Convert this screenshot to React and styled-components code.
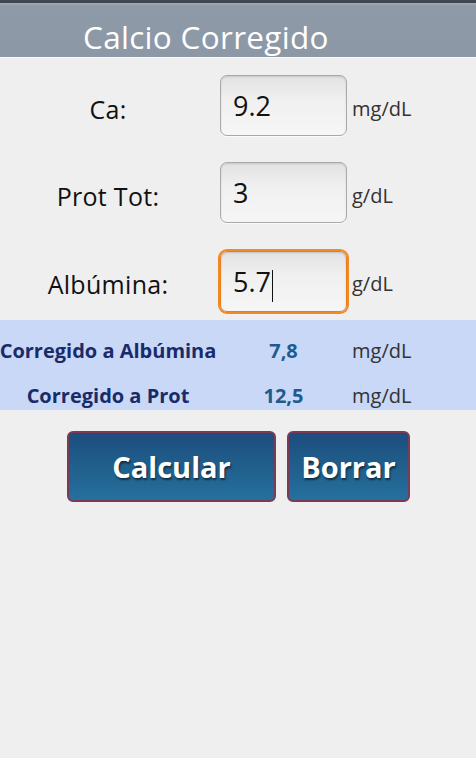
import React from "react";
import styled, { createGlobalStyle } from "styled-components";

const GlobalStyle = createGlobalStyle`
  html, body {
    margin: 0;
    padding: 0;
    background: #efefef;
    font-family: "Open Sans", "Noto Sans", "DejaVu Sans", sans-serif;
  }
`;

const Screen = styled.div`
  width: 476px;
  height: 758px;
  background: #efefef;
  overflow: hidden;
`;

const TitleBar = styled.div`
  height: 58px;
  box-sizing: border-box;
  border-top: 3px solid #3e4751;
  background: linear-gradient(#a3acb8 0px, #8f9aa8 3px, #8d98a6 100%);
  border-bottom: 1px solid #fafafa;
  padding-left: 83px;
  color: #ffffff;
  font-size: 31.5px;
  line-height: 68px;
  letter-spacing: 0.3px;
`;

const Form = styled.div`
  display: flex;
  flex-direction: column;
  gap: 26px;
  padding-top: 17px;
`;

const Row = styled.div`
  display: grid;
  grid-template-columns: 216px 4px 127px 5px 1fr;
  align-items: center;
  height: 61px;
`;

const Label = styled.div`
  grid-column: 1;
  text-align: center;
  font-size: 25px;
  color: #111;
  padding-top: 6px;
  letter-spacing: 0.3px;
`;

const Field = styled.div`
  grid-column: 3;
  box-sizing: border-box;
  height: 61px;
  border-radius: 7px;
  border: 1px solid ${(p) => (p.$focused ? "#ea7d1c" : "#a9a9a9")};
  box-shadow: ${(p) =>
    p.$focused
      ? "0 0 0 2px #ef8a26, inset 0 1px 2px rgba(0,0,0,0.15)"
      : "inset 0 1px 2px rgba(0,0,0,0.12), 0 1px 1px rgba(255,255,255,0.8)"};
  margin-top: ${(p) => (p.$focused ? "2px" : "0")};
  background: linear-gradient(#e2e2e2 0%, #f0f0f0 40%, #f6f6f6 100%);
  padding-left: 12px;
  font-size: 27px;
  line-height: 56px;
  color: #111;
  display: flex;
  align-items: center;
`;

const Caret = styled.span`
  display: inline-block;
  width: 1px;
  height: 32px;
  background: #111;
  margin-left: 1px;
  margin-top: 8px;
`;

const Unit = styled.div`
  grid-column: 5;
  font-size: 20px;
  color: #333;
  padding-top: 6px;
`;

const Results = styled.div`
  margin-top: 10px;
  background: #c8d8f6;
  padding-top: 16px;
  display: flex;
  flex-direction: column;
  gap: 16px;
  height: 90px;
  box-sizing: border-box;
`;

const ResultRow = styled.div`
  display: grid;
  grid-template-columns: 216px 4px 127px 5px 1fr;
  line-height: 29px;
  white-space: nowrap;
`;

const ResultLabel = styled.div`
  grid-column: 1;
  display: flex;
  justify-content: center;
  font-weight: 700;
  font-size: 20px;
  color: #1a2b6a;
`;

const ResultValue = styled.div`
  grid-column: 3;
  text-align: center;
  font-weight: 700;
  font-size: 20px;
  color: #1e5b8e;
`;

const ResultUnit = styled.div`
  grid-column: 5;
  font-size: 20px;
  color: #333;
`;

const Buttons = styled.div`
  display: flex;
  gap: 11px;
  padding-left: 67px;
  margin-top: 21px;
`;

const Button = styled.button`
  width: ${(p) => p.$w}px;
  height: 71px;
  box-sizing: border-box;
  border: 2px solid #7c3a55;
  border-radius: 6px;
  background: linear-gradient(#1c4d7f 0%, #21628f 60%, #26709f 100%);
  color: #ffffff;
  font-family: "Open Sans", "Noto Sans", sans-serif;
  font-weight: 700;
  font-size: 29px;
  text-shadow: 1px 2px 2px rgba(0, 0, 0, 0.55);
  padding: 0;
`;

const inputs = [
  { label: "Ca:", value: "9.2", unit: "mg/dL" },
  { label: "Prot Tot:", value: "3", unit: "g/dL" },
  { label: "Albúmina:", value: "5.7", unit: "g/dL", focused: true },
];

const results = [
  { label: "Corregido a Albúmina", value: "7,8", unit: "mg/dL" },
  { label: "Corregido a Prot", value: "12,5", unit: "mg/dL" },
];

export default function App() {
  return (
    <Screen>
      <GlobalStyle />
      <TitleBar>Calcio Corregido</TitleBar>
      <Form>
        {inputs.map((r) => (
          <Row key={r.label}>
            <Label>{r.label}</Label>
            <Field $focused={r.focused}>
              {r.value}
              {r.focused && <Caret />}
            </Field>
            <Unit>{r.unit}</Unit>
          </Row>
        ))}
      </Form>
      <Results>
        {results.map((r) => (
          <ResultRow key={r.label}>
            <ResultLabel>{r.label}</ResultLabel>
            <ResultValue>{r.value}</ResultValue>
            <ResultUnit>{r.unit}</ResultUnit>
          </ResultRow>
        ))}
      </Results>
      <Buttons>
        <Button $w={209}>Calcular</Button>
        <Button $w={123}>Borrar</Button>
      </Buttons>
    </Screen>
  );
}
